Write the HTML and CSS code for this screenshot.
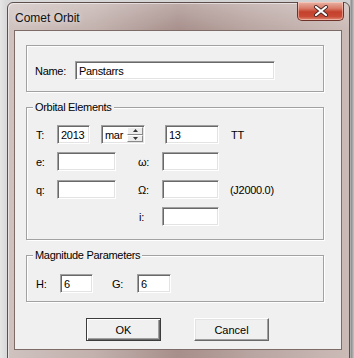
FILE: index.html
```html
<!DOCTYPE html>
<html>
<head>
<meta charset="utf-8">
<link rel="stylesheet" href="styles.css">
</head>
<body>
<div class="win">
  <div class="titlebar">
    <span class="title">Comet Orbit</span>
    <div class="close">
      <svg width="16" height="12" viewBox="0 0 16 12"><path d="M3 2 L13 10 M13 2 L3 10" stroke="#4a2a26" stroke-width="4" stroke-linecap="round"/><path d="M3 2 L13 10 M13 2 L3 10" stroke="#ffffff" stroke-width="2.2" stroke-linecap="round"/></svg>
    </div>
  </div>
  <div class="client">
    <div class="group g1">
      <div class="row">
        <span class="lbl w40">Name:</span>
        <div class="input w200">Panstarrs</div>
      </div>
    </div>
    <div class="group g2">
      <span class="legend">Orbital Elements</span>
      <div class="row">
        <span class="lbl w21">T:</span>
        <div class="input w33">2013</div>
        <span class="sp11"></span>
        <div class="spin">
          <span class="spintext">mar</span>
          <div class="spinbtns">
            <div class="sbtn"><svg width="5" height="3" viewBox="0 0 5 3"><path d="M0 3 L2.5 0 L5 3Z" fill="#333"/></svg></div>
            <div class="sbtn"><svg width="5" height="3" viewBox="0 0 5 3"><path d="M0 0 L2.5 3 L5 0Z" fill="#333"/></svg></div>
          </div>
        </div>
        <span class="sp20"></span>
        <div class="input w54">13</div>
        <span class="sp12"></span>
        <span class="txt">TT</span>
      </div>
      <div class="row r2">
        <span class="lbl w21">e:</span>
        <div class="input w59"></div>
        <span class="sp22"></span>
        <span class="lbl w24">ω:</span>
        <div class="input w57"></div>
      </div>
      <div class="row r3">
        <span class="lbl w21">q:</span>
        <div class="input w59"></div>
        <span class="sp22"></span>
        <span class="lbl w24">Ω:</span>
        <div class="input w57"></div>
        <span class="sp11"></span>
        <span class="txt">(J2000.0)</span>
      </div>
      <div class="row r4">
        <span class="sp102"></span>
        <span class="lbl w24 ind">i:</span>
        <div class="input w57"></div>
      </div>
    </div>
    <div class="group g3">
      <span class="legend">Magnitude Parameters</span>
      <div class="row">
        <span class="lbl w24">H:</span>
        <div class="input w33">6</div>
        <span class="sp19"></span>
        <span class="lbl w25">G:</span>
        <div class="input w34">6</div>
      </div>
    </div>
    <div class="buttons">
      <div class="btn default">OK</div>
      <div class="btn">Cancel</div>
    </div>
  </div>
</div>
</body>
</html>
```

FILE: styles.css
```css
html, body {
  margin: 0;
  padding: 0;
}
body {
  width: 354px;
  height: 358px;
  overflow: hidden;
  background: linear-gradient(90deg, #e6e6e6 0px, #d9d9d9 6px, #d0d0d0 350px, #8a8a8a 351px, #c4c4c4 354px);
  font-family: "Liberation Sans", Arial, sans-serif;
  font-size: 11px;
  letter-spacing: -0.3px;
  color: #000;
}
.win {
  position: relative;
  box-sizing: border-box;
  margin: 2px 0 0 7px;
  width: 343px;
  height: 358px;
  border: 1px solid #5e4f4c;
  border-radius: 6px 6px 0 0;
  padding: 0 7px 7px 6px;
  background:
    linear-gradient(180deg, rgba(255,255,255,0.25) 0px, rgba(255,255,255,0) 28px),
    linear-gradient(90deg, #cfc2bf 0%, #c2b1ad 25%, #a78f8b 50%, #b9a5a1 72%, #cbbbb7 100%);
  box-shadow: inset 1px 1px 0 rgba(255,255,255,0.5);
}
.titlebar {
  height: 27px;
  display: flex;
  align-items: center;
}
.title {
  font-family: "Liberation Sans", Arial, sans-serif;
  font-size: 12px;
  letter-spacing: 0;
  color: #111;
  padding-left: 1px;
  margin-top: 3px;
  text-shadow: 0 0 6px rgba(255,255,255,0.8);
}
.close {
  position: absolute;
  top: -1px;
  right: 5px;
  width: 47px;
  height: 19px;
  box-sizing: border-box;
  border: 1px solid #6e3229;
  border-top: none;
  border-radius: 0 0 5px 5px;
  background: linear-gradient(180deg, #e9b3a5 0%, #d97b68 35%, #c4402c 55%, #c94a36 80%, #de8a74 100%);
  display: flex;
  align-items: center;
  justify-content: center;
  box-shadow: inset 0 0 0 1px rgba(255,220,210,0.5);
}
.client {
  box-sizing: border-box;
  width: 328px;
  height: 320px;
  background: #f0f0f0;
  border: 1px solid #7d6b67;
  padding: 14px 0 0 11px;
}
.group {
  position: relative;
  box-sizing: border-box;
  width: 298px;
  border: 1px solid #a2a2a2;
  box-shadow: inset 1px 1px 0 #fff, 1px 1px 0 #fff;
}
.g1 {
  height: 47px;
  padding: 15px 0 0 8px;
}
.g2 {
  margin-top: 15px;
  height: 133px;
  padding: 17px 0 0 9px;
}
.g3 {
  margin-top: 15px;
  height: 47px;
  padding: 18px 0 0 9px;
}
.legend {
  position: absolute;
  left: 6px;
  top: -8px;
  line-height: 14px;
  padding: 0 2px;
  background: #f0f0f0;
}
.row {
  display: flex;
  align-items: center;
  height: 19px;
}
.r2 { margin-top: 8px; }
.r3 { margin-top: 9px; }
.r4 { margin-top: 8px; }
.lbl, .txt {
  flex: none;
  line-height: 14px;
}
.ind { padding-left: 1px; box-sizing: border-box; }
.w21 { width: 21px; }
.w24 { width: 24px; }
.w25 { width: 25px; }
.w40 { width: 40px; }
.sp11 { flex: none; width: 11px; }
.sp12 { flex: none; width: 12px; }
.sp19 { flex: none; width: 19px; }
.sp20 { flex: none; width: 20px; }
.sp22 { flex: none; width: 22px; }
.sp102 { flex: none; width: 102px; }
.input {
  flex: none;
  box-sizing: border-box;
  height: 19px;
  background: #fff;
  border-top: 1px solid #a0a0a0;
  border-left: 1px solid #a0a0a0;
  border-right: 1px solid #fff;
  border-bottom: 1px solid #fff;
  box-shadow: inset 1px 1px 0 #696969, inset -1px -1px 0 #e3e3e3;
  padding: 2px 0 0 3px;
  line-height: 14px;
  white-space: nowrap;
  overflow: hidden;
}
.w33 { width: 33px; }
.w34 { width: 34px; }
.w54 { width: 54px; }
.w57 { width: 57px; }
.w59 { width: 59px; }
.w200 { width: 200px; }
.spin {
  flex: none;
  box-sizing: border-box;
  width: 44px;
  height: 19px;
  background: #fff;
  border-top: 1px solid #a0a0a0;
  border-left: 1px solid #a0a0a0;
  border-right: 1px solid #fff;
  border-bottom: 1px solid #fff;
  box-shadow: inset 1px 1px 0 #696969, inset -1px -1px 0 #e3e3e3;
  display: flex;
  padding: 1px 1px 1px 1px;
}
.spintext {
  flex: 1;
  padding: 1px 0 0 2px;
  line-height: 14px;
}
.spinbtns {
  flex: none;
  width: 16px;
  display: flex;
  flex-direction: column;
}
.sbtn {
  flex: 1;
  box-sizing: border-box;
  background: #ececec;
  border: 1px solid;
  border-color: #fff #8a8a8a #8a8a8a #fff;
  display: flex;
  align-items: center;
  justify-content: center;
}
.buttons {
  display: flex;
  margin-top: 16px;
  padding-left: 60px;
  gap: 33px;
}
.btn {
  box-sizing: border-box;
  width: 75px;
  height: 23px;
  display: flex;
  align-items: center;
  justify-content: center;
  background: #f0f0f0;
  border: 1px solid;
  border-color: #fff #696969 #696969 #fff;
  box-shadow: inset -1px -1px 0 #a0a0a0, inset 1px 1px 0 #e3e3e3;
  letter-spacing: 0;
}
.btn.default {
  border: 1px solid #3c3c3c;
  box-shadow: inset 1px 1px 0 #fff, inset -1px -1px 0 #696969, inset -2px -2px 0 #a0a0a0;
}
```
